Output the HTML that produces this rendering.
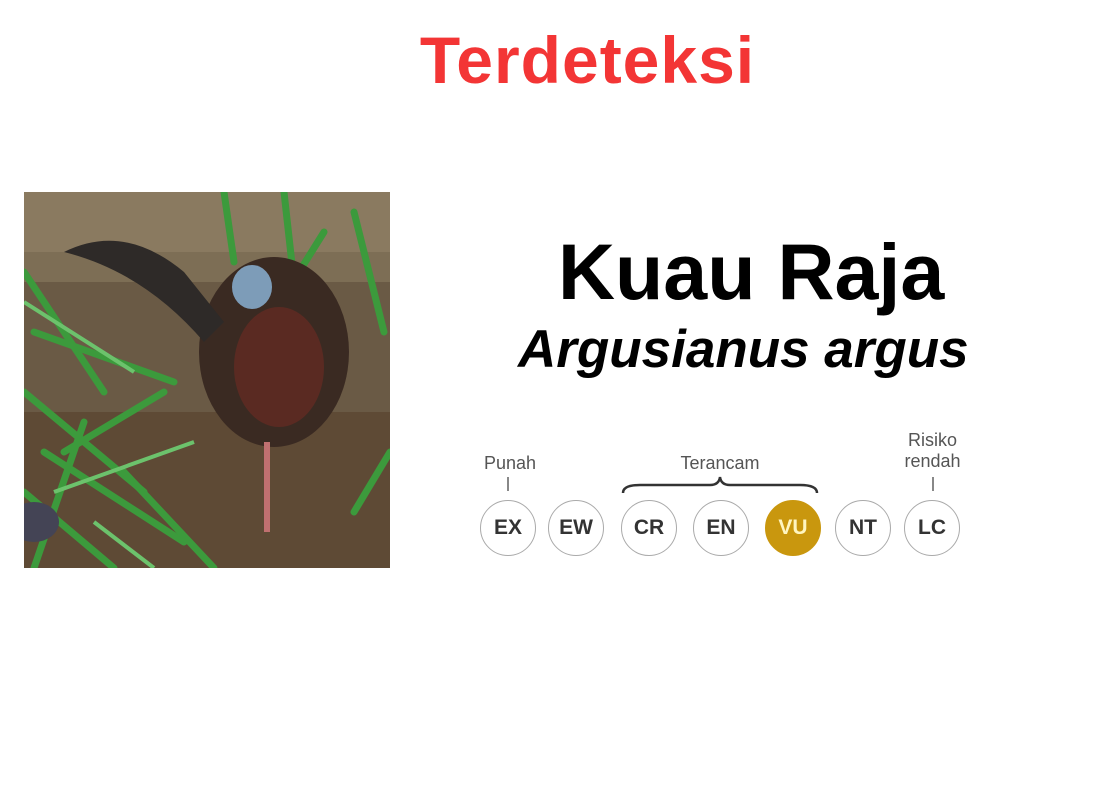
<!DOCTYPE html>
<html><head><style>
body{margin:0;width:1100px;height:800px;background:#fff;position:relative;overflow:hidden;font-family:"Liberation Sans",sans-serif}
.t{position:absolute;left:0;width:1175px;text-align:center;top:22px;font-size:66px;font-weight:bold;color:#f33535;letter-spacing:1px}
.n{position:absolute;left:558px;top:226px;font-size:79px;font-weight:bold;color:#000}
.s{position:absolute;left:518px;top:319px;font-size:53px;font-weight:bold;font-style:italic;color:#000}
.c{position:absolute;width:54px;height:54px;border:1.5px solid #aaa;border-radius:50%;text-align:center;line-height:54px;font-weight:bold;font-size:21px;color:#333}
.l{position:absolute;font-size:18px;color:#555;text-align:center;line-height:21px}
</style></head><body>
<div class="t">Terdeteksi</div>
<svg style="position:absolute;left:24px;top:192px" width="366" height="376">
<rect width="366" height="376" fill="#6a5a45"/>
<rect width="366" height="90" fill="#7d6e55"/>
<rect x="0" y="0" width="366" height="60" fill="#8a7a60"/>
<rect x="0" y="220" width="366" height="156" fill="#5e4a35"/>
<g stroke="#3c9a3c" stroke-width="7" fill="none" stroke-linecap="round">
<path d="M0 80 L80 200"/><path d="M10 140 L150 190"/><path d="M0 200 L120 300"/><path d="M20 260 L160 350"/><path d="M60 230 L10 376"/><path d="M100 280 L190 376"/><path d="M0 300 L90 376"/><path d="M140 200 L40 260"/><path d="M330 20 L360 140"/><path d="M300 40 L250 120"/><path d="M366 260 L330 320"/><path d="M200 0 L210 70"/><path d="M260 0 L270 90"/>
</g>
<g stroke="#6cc26c" stroke-width="4" fill="none"><path d="M0 110 L110 180"/><path d="M30 300 L170 250"/><path d="M70 330 L130 376"/></g>
<ellipse cx="250" cy="160" rx="75" ry="95" fill="#3a2a22"/>
<ellipse cx="255" cy="175" rx="45" ry="60" fill="#5a2a22"/>
<path d="M40 60 Q100 30 160 80 L200 130 L180 150 Q120 80 40 60Z" fill="#2e2a28"/>
<ellipse cx="228" cy="95" rx="20" ry="22" fill="#7d9cb8"/>
<rect x="240" y="250" width="6" height="90" fill="#c07070"/>
<ellipse cx="10" cy="330" rx="25" ry="20" fill="#445"/>
</svg>
<div class="n">Kuau Raja</div>
<div class="s">Argusianus argus</div>
<div class="l" style="left:470px;top:453px;width:80px">Punah</div>
<div style="position:absolute;left:507px;top:477px;width:1.5px;height:14px;background:#888"></div>
<div class="l" style="left:650px;top:453px;width:140px">Terancam</div>
<svg style="position:absolute;left:620px;top:475px" width="200" height="20"><path d="M3 18 Q3 10 20 10 L90 10 Q99 10 100 2 Q101 10 110 10 L180 10 Q197 10 197 18" fill="none" stroke="#333" stroke-width="2.5"/></svg>
<div class="l" style="left:890px;top:430px;width:85px">Risiko<br>rendah</div>
<div style="position:absolute;left:932px;top:477px;width:1.5px;height:14px;background:#888"></div>
<div class="c" style="left:480px;top:500px">EX</div>
<div class="c" style="left:548px;top:500px">EW</div>
<div class="c" style="left:621px;top:500px">CR</div>
<div class="c" style="left:693px;top:500px">EN</div>
<div class="c" style="left:765px;top:500px;background:#c9970e;border-color:#c9970e;color:#fff5c0">VU</div>
<div class="c" style="left:835px;top:500px">NT</div>
<div class="c" style="left:904px;top:500px">LC</div>
</body></html>
